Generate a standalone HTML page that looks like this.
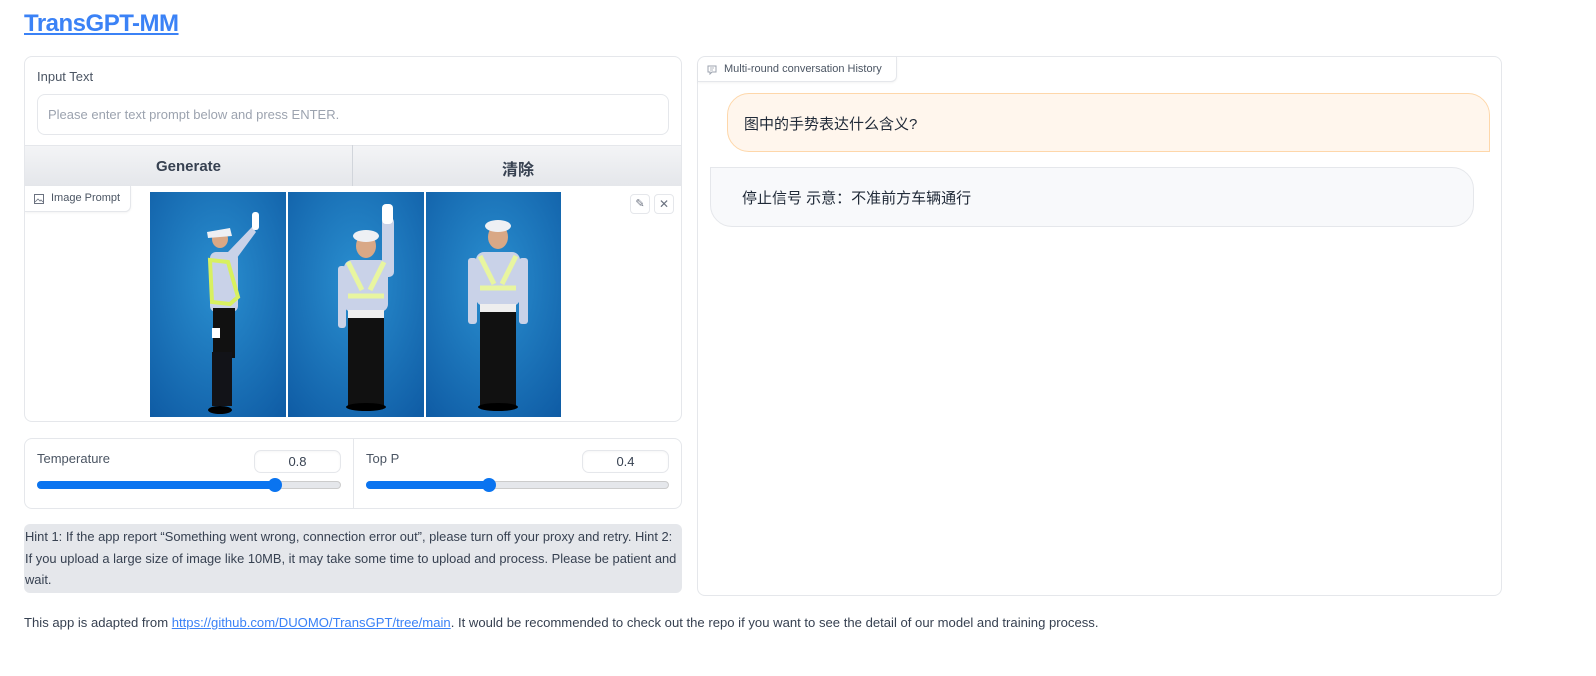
<!DOCTYPE html>
<html><head><meta charset="utf-8"><style>
*{box-sizing:border-box;margin:0;padding:0}
body{width:1596px;height:676px;background:#fff;font-family:"Liberation Sans","Noto Sans CJK SC",sans-serif;color:#374151;position:relative;overflow:hidden}
.a{position:absolute}
.box{border:1px solid #e5e7eb;border-radius:8px;background:#fff}
.lbl{font-size:13px;color:#4b5563}
.tag{border:1px solid #e5e7eb;border-top:none;border-left:none;border-radius:0 0 6px 0;background:#fff;font-size:11px;color:#4b5563;box-shadow:0 1px 2px rgba(0,0,0,.05)}
.in{border:1px solid #e5e7eb;border-radius:7px;font-size:13px;text-align:center;color:#374151;box-shadow:inset 0 1px 2px rgba(0,0,0,.04)}
</style></head><body>
<a class="a" style="left:24px;top:10px;font-size:24px;font-weight:bold;color:#3b82f6;text-decoration:underline;letter-spacing:-0.5px">TransGPT-MM</a>

<div class="a box" style="left:24px;top:56px;width:658px;height:366px;overflow:hidden">
 <div class="a lbl" style="left:12px;top:12px">Input Text</div>
 <div class="a" style="left:12px;top:37px;width:632px;height:41px;border:1px solid #e5e7eb;border-radius:8px;font-size:13px;color:#9ca3af;padding:12px 10px">Please enter text prompt below and press ENTER.</div>
 <div class="a" style="left:0;top:88px;width:658px;height:41px;background:linear-gradient(#f3f4f6,#e5e7eb);border-top:1px solid #e5e7eb;border-bottom:1px solid #e5e7eb"></div>
 <div class="a" style="left:327px;top:88px;width:1px;height:41px;background:#d1d5db"></div>
 <div class="a" style="left:0;top:101px;width:327px;text-align:center;font-size:15px;font-weight:bold;color:#374151">Generate</div>
 <div class="a" style="left:328px;top:99px;width:330px;text-align:center;font-size:16px;font-weight:bold;color:#374151">清除</div>
 <div class="a tag" style="left:0;top:129px;width:106px;height:26px;padding:6px 0 0 26px">Image Prompt</div>
 <svg class="a" style="left:9px;top:137px" width="10" height="10" viewBox="0 0 10 10"><rect x=".5" y=".5" width="9" height="9" fill="none" stroke="#6b7280"/><path d="M1 8l3-3 2 2 1-1 2 2" fill="none" stroke="#6b7280" stroke-width=".8"/></svg>
 <div class="a" style="left:605px;top:137px;width:20px;height:20px;border:1px solid #e5e7eb;border-radius:4px;font-size:11px;color:#6b7280;text-align:center;line-height:18px">✎</div>
 <div class="a" style="left:629px;top:137px;width:20px;height:20px;border:1px solid #e5e7eb;border-radius:4px;font-size:12px;color:#6b7280;text-align:center;line-height:18px">✕</div>
</div>
<svg class="a" style="left:150px;top:192px" width="411" height="225" viewBox="0 0 411 225">
 <defs><radialGradient id="bg" cx=".5" cy=".4" r=".8"><stop offset="0" stop-color="#2a8fd0"/><stop offset="1" stop-color="#0e5aa3"/></radialGradient></defs>
 <rect x="0" y="0" width="136" height="225" fill="url(#bg)"/>
 <rect x="138" y="0" width="136" height="225" fill="url(#bg)"/>
 <rect x="276" y="0" width="135" height="225" fill="url(#bg)"/>
 <g>
  <path d="M78 60 L102 35 L106 40 L84 70Z" fill="#c9d2e8"/>
  <rect x="102" y="20" width="7" height="18" rx="3" fill="#fff"/>
  <ellipse cx="70" cy="47" rx="8" ry="9" fill="#d9a886"/>
  <path d="M57 40 L80 36 L82 44 L58 46Z" fill="#eef0f4"/>
  <rect x="60" y="60" width="28" height="60" rx="6" fill="#c9d2e8"/>
  <path d="M60 68 L78 70 L88 105 L80 112 L62 110Z" fill="none" stroke="#d8f060" stroke-width="4"/>
  <rect x="63" y="116" width="22" height="50" fill="#111"/>
  <rect x="62" y="160" width="20" height="54" fill="#121318"/>
  <ellipse cx="70" cy="218" rx="12" ry="4" fill="#000"/>
  <rect x="62" y="136" width="8" height="10" fill="#fff"/>
 </g>
 <g>
  <rect x="232" y="25" width="12" height="60" rx="5" fill="#c9d2e8"/>
  <rect x="232" y="12" width="11" height="20" rx="4" fill="#fff"/>
  <ellipse cx="216" cy="54" rx="10" ry="12" fill="#d9a886"/>
  <ellipse cx="216" cy="44" rx="13" ry="6" fill="#eef0f4"/>
  <rect x="194" y="68" width="44" height="52" rx="8" fill="#c9d2e8"/>
  <rect x="188" y="74" width="8" height="62" rx="3" fill="#c9d2e8"/>
  <path d="M198 70 L212 98 M234 70 L220 98 M198 104 H234" stroke="#e8f5a0" stroke-width="5" fill="none"/>
  <rect x="198" y="118" width="36" height="8" fill="#eee"/>
  <rect x="198" y="126" width="36" height="90" fill="#111"/>
  <ellipse cx="216" cy="215" rx="20" ry="4" fill="#000"/>
 </g>
 <g>
  <ellipse cx="348" cy="45" rx="10" ry="12" fill="#d9a886"/>
  <ellipse cx="348" cy="34" rx="13" ry="6" fill="#eef0f4"/>
  <rect x="326" y="60" width="44" height="54" rx="8" fill="#c9d2e8"/>
  <rect x="318" y="66" width="9" height="66" rx="3" fill="#c9d2e8"/>
  <rect x="369" y="66" width="9" height="66" rx="3" fill="#c9d2e8"/>
  <path d="M330 64 L344 92 M366 64 L352 92 M330 96 H366" stroke="#e8f5a0" stroke-width="5" fill="none"/>
  <rect x="330" y="112" width="36" height="8" fill="#eee"/>
  <rect x="330" y="120" width="36" height="95" fill="#111"/>
  <ellipse cx="348" cy="215" rx="20" ry="4" fill="#000"/>
 </g>
</svg>

<div class="a box" style="left:24px;top:438px;width:658px;height:71px">
 <div class="a" style="left:328px;top:0;width:1px;height:69px;background:#e5e7eb"></div>
 <div class="a lbl" style="left:12px;top:12px">Temperature</div>
 <div class="a in" style="left:229px;top:11px;width:87px;height:23px;line-height:21px">0.8</div>
 <div class="a" style="left:12px;top:42px;width:304px;height:8px;border-radius:4px;background:#e5e7eb;border:1px solid #ccc"></div>
 <div class="a" style="left:12px;top:42px;width:238px;height:8px;border-radius:4px;background:#0a74f0"></div>
 <div class="a" style="left:243px;top:39px;width:14px;height:14px;border-radius:50%;background:#0a74f0"></div>
 <div class="a lbl" style="left:341px;top:12px">Top P</div>
 <div class="a in" style="left:557px;top:11px;width:87px;height:23px;line-height:21px">0.4</div>
 <div class="a" style="left:341px;top:42px;width:303px;height:8px;border-radius:4px;background:#e5e7eb;border:1px solid #ccc"></div>
 <div class="a" style="left:341px;top:42px;width:123px;height:8px;border-radius:4px;background:#0a74f0"></div>
 <div class="a" style="left:457px;top:39px;width:14px;height:14px;border-radius:50%;background:#0a74f0"></div>
</div>

<div class="a" style="left:24px;top:524px;width:658px;height:69px;background:#e5e7eb;border-radius:6px;font-size:12.9px;line-height:21.5px;color:#374151;padding:2px 1px">Hint 1: If the app report “Something went wrong, connection error out”, please turn off your proxy and retry. Hint 2: If you upload a large size of image like 10MB, it may take some time to upload and process. Please be patient and wait.</div>

<div class="a" style="left:24px;top:615px;font-size:13.1px;color:#374151">This app is adapted from <span style="color:#3b82f6;text-decoration:underline">https://github.com/DUOMO/TransGPT/tree/main</span>. It would be recommended to check out the repo if you want to see the detail of our model and training process.</div>

<div class="a box" style="left:697px;top:56px;width:805px;height:540px">
 <div class="a tag" style="left:0;top:0;width:199px;height:25px;padding:6px 0 0 26px;border-radius:8px 0 6px 0">Multi-round conversation History</div>
 <svg class="a" style="left:9px;top:8px" width="10" height="10" viewBox="0 0 10 10"><path d="M1 1h8v6H5l-2 2V7H1Z" fill="none" stroke="#9ca3af"/><path d="M3 3h4M3 5h3" stroke="#9ca3af" stroke-width=".8"/></svg>
 <div class="a" style="left:29px;top:36px;width:763px;height:59px;background:#fff6ed;border:1px solid #fed7aa;border-radius:22px 22px 0 22px;font-size:15px;color:#1f2937;padding:19px 0 0 16px">图中的手势表达什么含义?</div>
 <div class="a" style="left:12px;top:110px;width:764px;height:60px;background:#f8f9fb;border:1px solid #e5e7eb;border-radius:0 22px 22px 22px;font-size:15px;color:#1f2937;padding:19px 0 0 31px">停止信号 示意：不准前方车辆通行</div>
</div>
</body></html>
